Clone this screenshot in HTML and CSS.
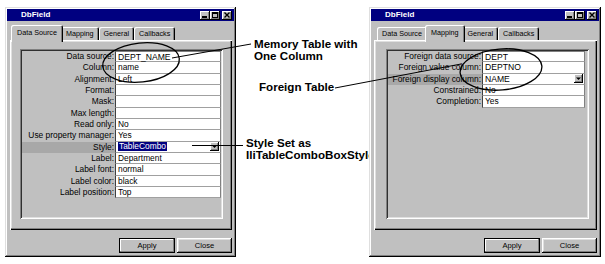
FILE: index.html
```html
<!DOCTYPE html>
<html>
<head>
<meta charset="utf-8">
<title>DbField</title>
<link rel="stylesheet" href="styles.css">
</head>
<body>
<div class="desk">
  <div class="note note-memory">Memory Table with<br>One Column</div>
  <div class="note note-foreign">Foreign Table</div>
  <div class="note note-style">Style Set as<br>IliTableComboBoxStyle</div>

  <section class="win">
    <header class="titlebar">
      <span class="title">DbField</span>
      <span class="tbtns">
        <span class="tbtn"><svg width="10" height="9" viewBox="0 0 10 9"><rect x="2" y="5" width="5" height="2" fill="#000"/></svg></span>
        <span class="tbtn"><svg width="10" height="9" viewBox="0 0 10 9"><path d="M2 1h6v6H2z M3 3v3h4V3z" fill="#000" fill-rule="evenodd"/></svg></span>
        <span class="tbtn x"><svg width="10" height="9" viewBox="0 0 10 9"><path d="M2.5 1.5l5 5M7.5 1.5l-5 5" stroke="#000" stroke-width="1.4"/></svg></span>
      </span>
    </header>
    <nav class="tabs">
      <span class="tab on">Data Source</span>
      <span class="tab">Mapping</span>
      <span class="tab">General</span>
      <span class="tab">Callbacks</span>
    </nav>
    <div class="page">
      <div class="panel">
        <div class="grid">
          <div class="lbl">Data source:</div><div class="val top big">DEPT_NAME</div>
          <div class="lbl">Column:</div><div class="val">name</div>
          <div class="lbl">Alignment:</div><div class="val">Left</div>
          <div class="lbl">Format:</div><div class="val"></div>
          <div class="lbl">Mask:</div><div class="val"></div>
          <div class="lbl">Max length:</div><div class="val"></div>
          <div class="lbl">Read only:</div><div class="val">No</div>
          <div class="lbl">Use property manager:</div><div class="val">Yes</div>
          <div class="lbl hl">Style:</div><div class="val"><span class="sel">TableCombo</span><span class="dd"><svg width="9" height="9" viewBox="0 0 9 9"><path d="M2 3.5h5L4.5 6z" fill="#000"/></svg></span></div>
          <div class="lbl">Label:</div><div class="val">Department</div>
          <div class="lbl">Label font:</div><div class="val">normal</div>
          <div class="lbl">Label color:</div><div class="val">black</div>
          <div class="lbl">Label position:</div><div class="val">Top</div>
        </div>
      </div>
    </div>
    <footer class="btns">
      <button class="btn def">Apply</button>
      <button class="btn">Close</button>
    </footer>
  </section>

  <section class="win win-b">
    <header class="titlebar">
      <span class="title">DbField</span>
      <span class="tbtns">
        <span class="tbtn"><svg width="10" height="9" viewBox="0 0 10 9"><rect x="2" y="5" width="5" height="2" fill="#000"/></svg></span>
        <span class="tbtn"><svg width="10" height="9" viewBox="0 0 10 9"><path d="M2 1h6v6H2z M3 3v3h4V3z" fill="#000" fill-rule="evenodd"/></svg></span>
        <span class="tbtn x"><svg width="10" height="9" viewBox="0 0 10 9"><path d="M2.5 1.5l5 5M7.5 1.5l-5 5" stroke="#000" stroke-width="1.4"/></svg></span>
      </span>
    </header>
    <nav class="tabs">
      <span class="tab">Data Source</span>
      <span class="tab on">Mapping</span>
      <span class="tab">General</span>
      <span class="tab">Callbacks</span>
    </nav>
    <div class="page page-b">
      <div class="panel">
        <div class="grid grid-b">
          <div class="lbl">Foreign data source:</div><div class="val top big">DEPT</div>
          <div class="lbl">Foreign value column:</div><div class="val big">DEPTNO</div>
          <div class="lbl hl">Foreign display column:</div><div class="val big">NAME<span class="dd"><svg width="9" height="9" viewBox="0 0 9 9"><path d="M2 3.5h5L4.5 6z" fill="#000"/></svg></span></div>
          <div class="lbl">Constrained:</div><div class="val">No</div>
          <div class="lbl">Completion:</div><div class="val">Yes</div>
        </div>
      </div>
    </div>
    <footer class="btns">
      <button class="btn def">Apply</button>
      <button class="btn">Close</button>
    </footer>
  </section>

  <svg class="marks" width="605" height="264" viewBox="0 0 605 264">
    <g fill="none" stroke="#000">
      <ellipse cx="141" cy="62.5" rx="38.5" ry="19.5" transform="rotate(-6 141 62.5)" stroke-width="1.3"/>
      <ellipse cx="501" cy="69.5" rx="41" ry="20.5" transform="rotate(-5 501 69.5)" stroke-width="1.3"/>
      <path d="M172 58L251 44" stroke-width="1"/>
      <path d="M335 88L461 64" stroke-width="1"/>
      <path d="M192 145.5H243" stroke-width="1"/>
    </g>
  </svg>
</div>
</body>
</html>
```

FILE: styles.css
```css
* { box-sizing: border-box; }
html, body { margin: 0; padding: 0; }
body {
  width: 605px;
  height: 264px;
  overflow: hidden;
  background: #fff;
  color: #000;
  font-family: "Liberation Sans", Arial, sans-serif;
}
.desk {
  position: relative;
  width: 605px;
  height: 264px;
  display: flex;
  align-items: flex-start;
  gap: 133px;
  padding: 7px 0 0 5px;
}

/* annotations */
.note {
  position: absolute;
  z-index: 0;
  font-weight: bold;
  font-size: 11.6px;
  line-height: 11.5px;
  white-space: nowrap;
}
.note-memory { left: 254px; top: 38px; }
.note-foreign { left: 259px; top: 81px; }
.note-style { left: 246px; top: 137px; }
.marks {
  position: absolute;
  left: 0;
  top: 0;
  z-index: 2;
  pointer-events: none;
}

/* window */
.win {
  position: relative;
  z-index: 1;
  width: 231px;
  height: 250px;
  padding: 2px;
  background: #c0c0c0;
  box-shadow: inset -1px -1px #000, inset 1px 1px #dfdfdf, inset -2px -2px #808080, inset 2px 2px #fff;
  display: flex;
  flex-direction: column;
}
.win-b { width: 232px; }

.titlebar {
  height: 12px;
  background: #000080;
  display: flex;
  align-items: center;
  justify-content: space-between;
  padding: 0 2px 0 14px;
}
.title {
  color: #fff;
  font-weight: bold;
  font-size: 8px;
  line-height: 12px;
}
.tbtns { display: flex; }
.tbtn {
  display: block;
  width: 10px;
  height: 9px;
  background: #c0c0c0;
  box-shadow: inset -1px -1px #000, inset 1px 1px #fff, inset -2px -2px #808080;
}
.tbtn svg { display: block; }
.tbtn.x { margin-left: 2px; }

/* tabs */
.tabs {
  display: flex;
  align-items: flex-end;
  height: 15px;
  margin-top: 4px;
  padding-left: 6px;
}
.tab {
  height: 13px;
  padding: 0 5px;
  font-size: 7.2px;
  line-height: 13px;
  white-space: nowrap;
  background: #c0c0c0;
  border-radius: 2px 2px 0 0;
  box-shadow: inset 1px 1px #fff, inset -1px 0 #000, inset -2px 0 #808080;
}
.tab.on {
  position: relative;
  z-index: 1;
  height: 17px;
  margin: 0 -2px -2px;
  padding: 0 6px 2px;
  line-height: 15px;
}

/* page */
.page {
  height: 190px;
  margin: 0 2px 0 3px;
  padding: 9px 9px 11px 10px;
  background: #c0c0c0;
  box-shadow: inset 1px 1px #fff, inset -1px -1px #000, inset -2px -2px #808080, inset 2px 2px #dfdfdf;
}
.page-b { padding: 9px 8px 11px 12px; }
.panel {
  height: 100%;
  padding: 2px;
  box-shadow: inset 1px 1px #808080, inset -1px -1px #fff, inset 2px 2px #303030, inset -2px -2px #dfdfdf;
}

/* property grid */
.grid {
  display: grid;
  grid-template-columns: 93px 106px;
  grid-auto-rows: 11.33px;
}
.grid-b { grid-template-columns: 94px 103px; }
.lbl {
  font-size: 8.4px;
  line-height: 11.33px;
  text-align: right;
  padding-right: 1px;
  white-space: nowrap;
}
.lbl.hl { background: #a8a8a8; }
.val {
  display: flex;
  align-items: center;
  background: #fff;
  border-left: 1px solid #404040;
  border-right: 1px solid #808080;
  border-bottom: 1px solid #a0a0a0;
  padding-left: 2px;
  font-size: 8.4px;
  white-space: nowrap;
}
.val.top { border-top: 1px solid #808080; }
.val.big { font-size: 8.6px; }
.sel {
  background: #000080;
  color: #fff;
  padding: 0 1px;
  line-height: 9px;
}
.dd {
  display: block;
  margin-left: auto;
  margin-right: 1px;
  width: 9px;
  height: 9px;
  background: #c0c0c0;
  box-shadow: inset -1px -1px #000, inset 1px 1px #fff, inset -2px -2px #808080;
}
.dd svg { display: block; }

/* buttons */
.btns {
  display: flex;
  justify-content: flex-end;
  gap: 2px;
  margin-top: 8px;
  padding-right: 2px;
}
.btn {
  width: 55px;
  height: 15px;
  border: 0;
  padding: 0;
  background: #c0c0c0;
  color: #000;
  font-family: "Liberation Sans", Arial, sans-serif;
  font-size: 7.6px;
  box-shadow: inset -1px -1px #000, inset 1px 1px #fff, inset -2px -2px #808080, inset 2px 2px #dfdfdf;
}
.btn.def {
  width: 56px;
  box-shadow: inset 0 0 0 1px #000, inset -2px -2px #808080, inset 2px 2px #fff;
}
```
